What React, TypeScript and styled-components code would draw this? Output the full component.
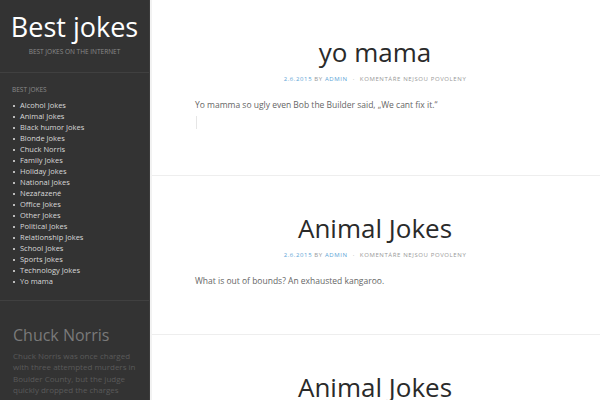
import styled, { createGlobalStyle } from "styled-components";

const GlobalStyle = createGlobalStyle`
  html, body {
    margin: 0;
    padding: 0;
    overflow: hidden;
    background: #fff;
    font-family: "Open Sans", "Liberation Sans", sans-serif;
  }
`;

const Page = styled.div`
  display: flex;
  width: 600px;
  height: 400px;
  overflow: hidden;
`;

const Sidebar = styled.aside`
  flex: 0 0 149px;
  background: #333;
  border-right: 1px solid #3c3c3c;
  color: #ddd;
  overflow: hidden;
`;

const Header = styled.header`
  padding: 11px 0 16px;
  text-align: center;
  border-bottom: 1px solid #404040;
`;

const SiteTitle = styled.h1`
  margin: 0;
  font-size: 27px;
  line-height: 32px;
  font-weight: 400;
  color: #fff;
`;

const Tagline = styled.p`
  margin: 5px 0 0;
  font-size: 6.5px;
  line-height: 8px;
  text-transform: uppercase;
  color: #8a8a8a;
`;

const Widget = styled.section<{ $border?: boolean }>`
  padding: ${({ $border }) => ($border ? "13px 12px 13px" : "24px 13px 0")};
  border-bottom: ${({ $border }) => ($border ? "1px solid #404040" : "none")};
`;

const WidgetLabel = styled.h3`
  margin: 0 0 6px;
  font-size: 6.5px;
  line-height: 8px;
  font-weight: 400;
  text-transform: uppercase;
  color: #8a8a8a;
`;

const CatList = styled.ul`
  margin: 0;
  padding: 0;
  list-style: none;
`;

const CatItem = styled.li`
  position: relative;
  padding-left: 8px;
  font-size: 7.5px;
  line-height: 11px;
  color: #d8d8d8;

  &::before {
    content: "";
    position: absolute;
    left: 1px;
    top: 5px;
    width: 2px;
    height: 2px;
    background: #bbb;
  }
`;

const WidgetTitle = styled.h2`
  margin: 0 0 5px;
  font-size: 16px;
  line-height: 20px;
  font-weight: 400;
  color: #7a7a7a;
`;

const WidgetText = styled.p`
  margin: 0;
  font-size: 8px;
  line-height: 11.4px;
  color: #5a5a5a;
`;

const Main = styled.main`
  flex: 1;
  box-shadow: inset 2px 0 0 #f2f2f2;
  overflow: hidden;
`;

const Post = styled.article`
  margin-left: 2px;
  padding: 37px 45px 46px 43px;
  border-bottom: 1px solid #eee;
`;

const PostTitle = styled.h2`
  margin: 0;
  text-align: center;
  font-size: 26px;
  line-height: 31px;
  font-weight: 400;
  color: #2a2a2a;
`;

const Meta = styled.div`
  margin-top: 6px;
  text-align: center;
  font-size: 6px;
  line-height: 10px;
  letter-spacing: 0.6px;
  text-transform: uppercase;
  color: #999;
`;

const MetaLink = styled.span`
  color: #5ba4d6;
`;

const Dot = styled.span`
  margin: 0 5px;
`;

const Body = styled.p`
  margin: 14px 0 0;
  font-size: 8.5px;
  line-height: 14px;
  font-weight: 400;
  color: #666;
`;

const EmptyQuote = styled.div`
  margin: 4px 0 0 1px;
  height: 13px;
  border-left: 1px solid #e6e6e6;
`;

const categories = [
  "Alcohol Jokes",
  "Animal Jokes",
  "Black humor Jokes",
  "Blonde Jokes",
  "Chuck Norris",
  "Family Jokes",
  "Holiday Jokes",
  "National Jokes",
  "Nezařazené",
  "Office Jokes",
  "Other Jokes",
  "Political Jokes",
  "Relationship Jokes",
  "School Jokes",
  "Sports Jokes",
  "Technology Jokes",
  "Yo mama",
];

const posts = [
  {
    title: "yo mama",
    text: "Yo mamma so ugly even Bob the Builder said, „We cant fix it.\u201C",
    quote: true,
  },
  { title: "Animal Jokes", text: "What is out of bounds? An exhausted kangaroo.", quote: false },
  { title: "Animal Jokes", text: "", quote: false },
];

const App = () => {
  return (
    <Page>
      <GlobalStyle />
      <Sidebar>
        <Header>
          <SiteTitle>Best jokes</SiteTitle>
          <Tagline>Best jokes on the internet</Tagline>
        </Header>
        <Widget $border>
          <WidgetLabel>Best jokes</WidgetLabel>
          <CatList>
            {categories.map((c) => (
              <CatItem key={c}>{c}</CatItem>
            ))}
          </CatList>
        </Widget>
        <Widget>
          <WidgetTitle>Chuck Norris</WidgetTitle>
          <WidgetText>
            Chuck Norris was once charged with three attempted murders in
            Boulder County, but the judge quickly dropped the charges because
            Chuck Norris does not "attempt" murder.
          </WidgetText>
        </Widget>
      </Sidebar>
      <Main>
        {posts.map((p, i) => (
          <Post key={i}>
            <PostTitle>{p.title}</PostTitle>
            <Meta>
              <MetaLink>2.6.2015</MetaLink> by <MetaLink>admin</MetaLink>
              <Dot>·</Dot>Komentáře nejsou povoleny
            </Meta>
            {p.text && <Body>{p.text}</Body>}
            {p.quote && <EmptyQuote />}
          </Post>
        ))}
      </Main>
    </Page>
  );
};

export default App;
